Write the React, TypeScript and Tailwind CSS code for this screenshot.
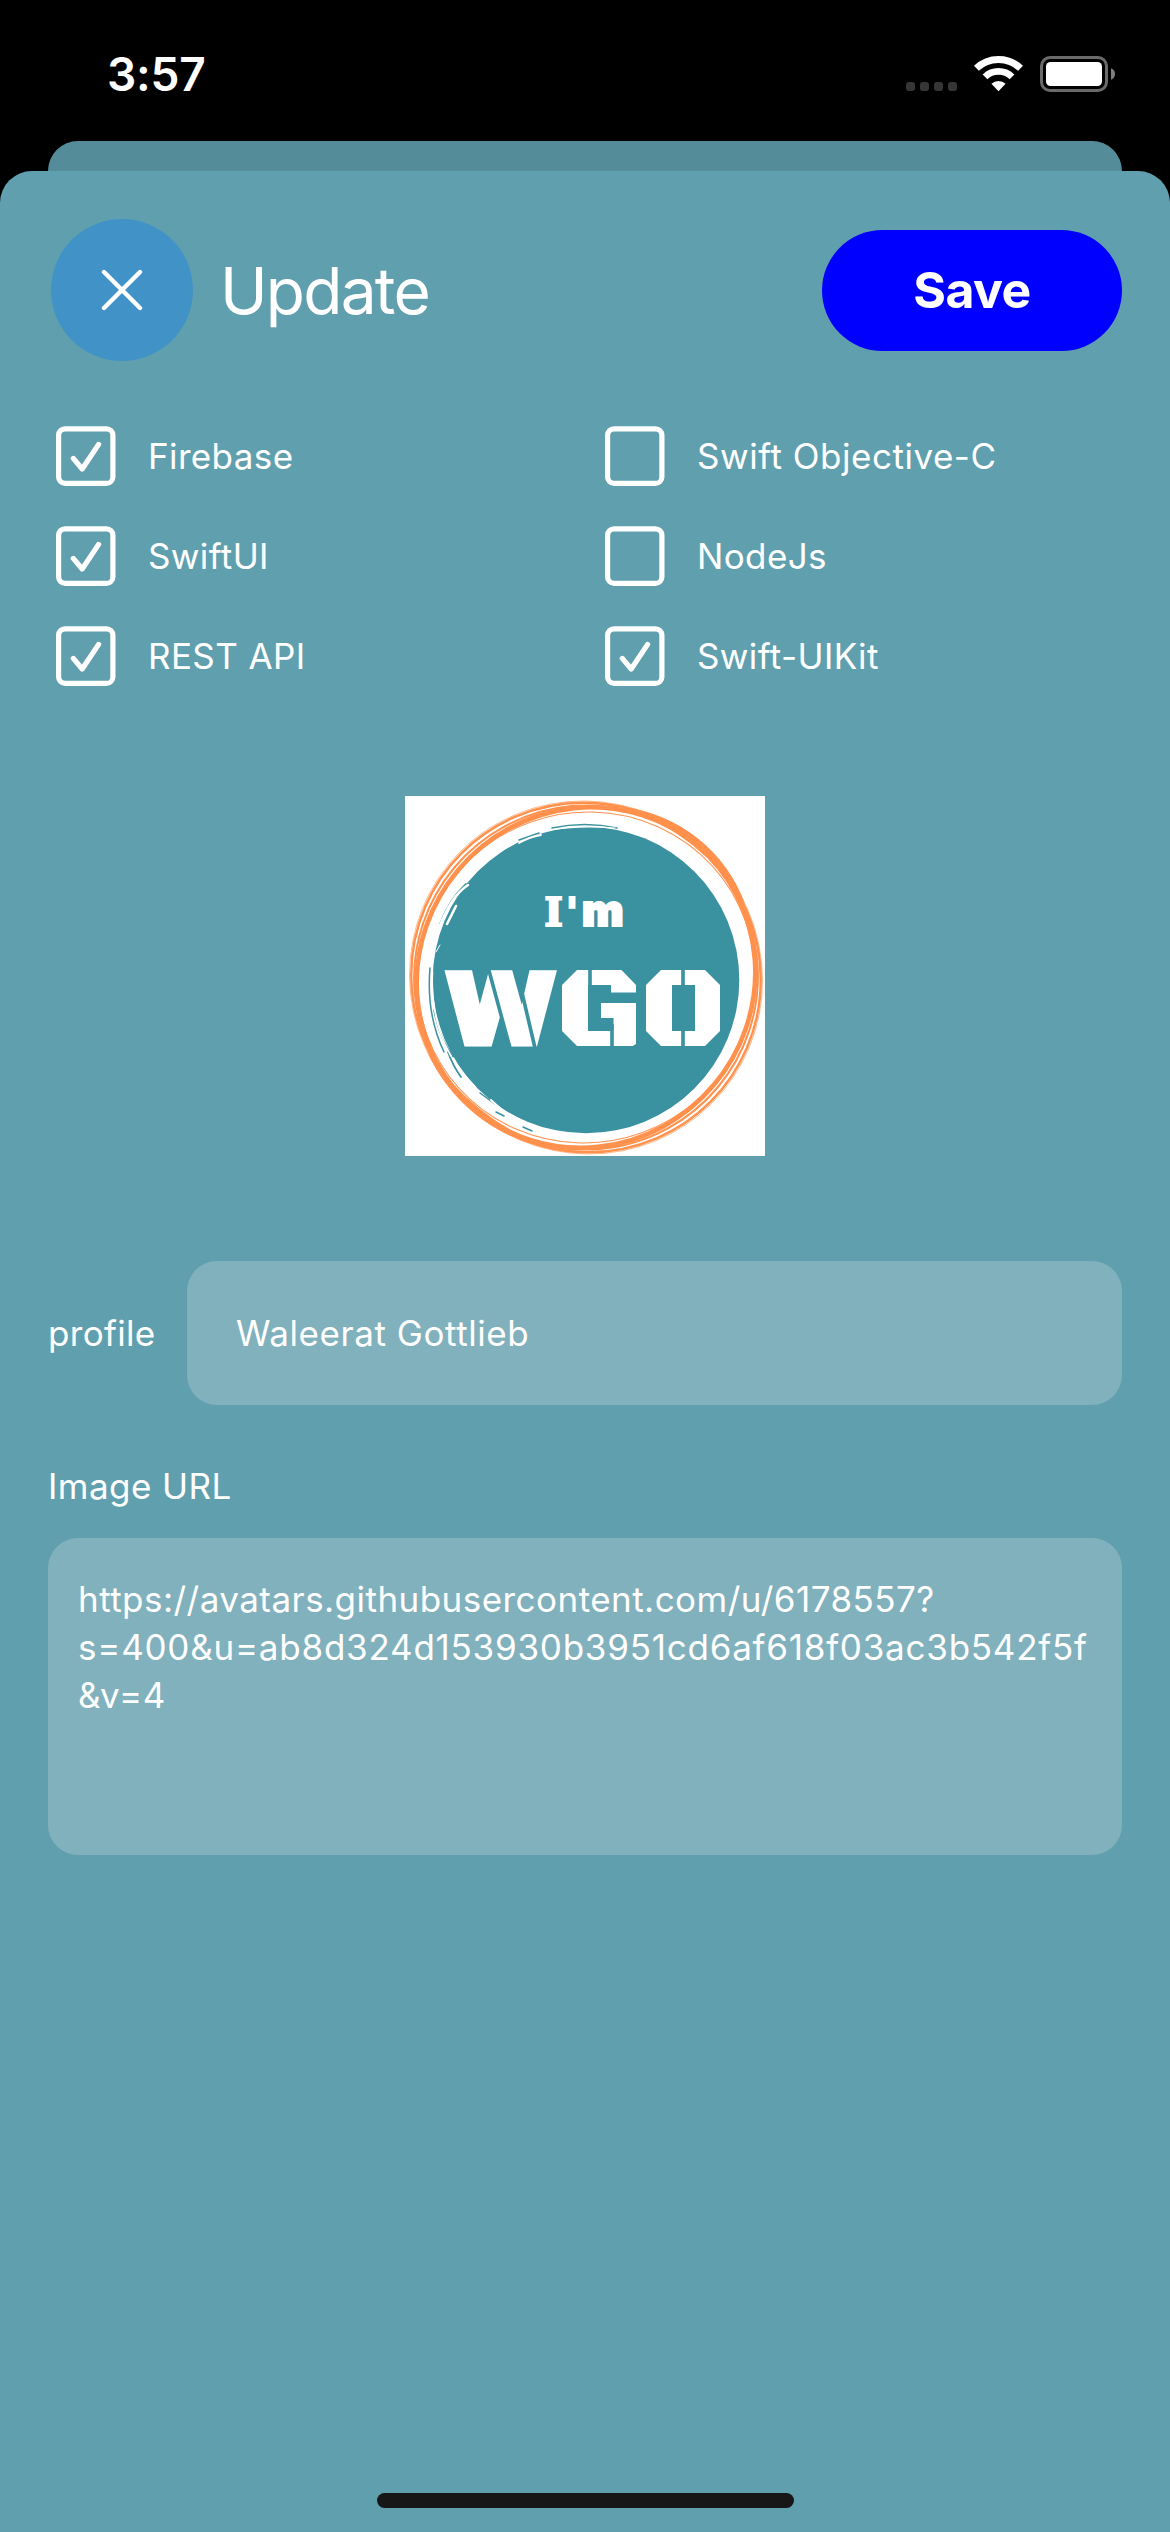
import React from "react";

type Skill = { label: string; on: boolean; tracking: string };

const SKILLS: Skill[] = [
  { label: "Firebase", on: true, tracking: "tracking-[0.37px]" },
  { label: "Swift Objective-C", on: false, tracking: "tracking-[0.52px]" },
  { label: "SwiftUI", on: true, tracking: "tracking-[0.38px]" },
  { label: "NodeJs", on: false, tracking: "tracking-[0.37px]" },
  { label: "REST API", on: true, tracking: "tracking-[0.4px]" },
  { label: "Swift-UIKit", on: true, tracking: "tracking-[0.38px]" },
];

function StatusBar() {
  return (
    <div className="flex h-[141px] items-start justify-between pl-[107px] pr-[55px] text-white">
      <span className="mt-[46px] text-[46px] leading-[56px] font-semibold tracking-[-0.2px]">3:57</span>
      <div className="mt-[55px] flex items-start">
        <div className="mt-[27px] flex gap-[5px]">
          <i className="size-[9px] rounded-[3px] bg-[#363636]" />
          <i className="size-[9px] rounded-[3px] bg-[#363636]" />
          <i className="size-[9px] rounded-[3px] bg-[#363636]" />
          <i className="size-[9px] rounded-[3px] bg-[#363636]" />
        </div>
        <svg className="ml-[17px]" width="49" height="37" viewBox="0 0 49 37" fill="none">
          <path d="M2.4 13.3A32 32 0 0 1 46.6 13.3" stroke="#fff" strokeWidth="7" />
          <path d="M11 21.9A19.5 19.5 0 0 1 38 21.9" stroke="#fff" strokeWidth="6.8" />
          <path d="M24.5 36.2L17.4 28.7A10.8 10.8 0 0 1 31.6 28.7Z" fill="#fff" />
        </svg>
        <svg className="ml-[17px]" width="75" height="37" viewBox="0 0 75 37" fill="none">
          <rect x="1.5" y="2.5" width="65" height="33" rx="8.5" stroke="#6a6a6a" strokeWidth="3" />
          <rect x="6" y="7" width="56" height="24" rx="4.5" fill="#fff" />
          <path d="M71 13.3Q75 15 75 19T71 24.7Z" fill="#7f7f7f" />
        </svg>
      </div>
    </div>
  );
}

function CheckItem({ label, on, tracking }: Skill) {
  return (
    <label className="flex h-[60px] items-center">
      <svg width="60" height="60" viewBox="0 0 60 60" fill="none" stroke="#fff" strokeWidth="5.2">
        <rect x="2.6" y="2.8" width="54.3" height="54.6" rx="6.5" />
        {on && <path d="M17.3 32.4L26.2 43L42.6 18.4" strokeLinecap="round" strokeLinejoin="round" />}
      </svg>
      <span className={`ml-[32px] text-[35px] whitespace-nowrap ${tracking}`}>{label}</span>
    </label>
  );
}

function Logo() {
  return (
    <svg width="360" height="360" viewBox="0 0 360 360" className="bg-white" fill="none">
      <defs>
        <clipPath id="octagon-g">
          <path d="M157 189L172 174H216.500L231 189V250H172L157 235Z" />
        </clipPath>
        <clipPath id="octagon-o">
          <path d="M241 189L256 174H300L315 189V235L300 250H256L241 235Z" />
        </clipPath>
      </defs>

      {/* hand-drawn orange rings */}
      <g stroke="#ff914d">
        <ellipse cx="181" cy="181.500" rx="172.500" ry="167" strokeWidth="4.600" transform="rotate(-50 181 181.5)" />
        <ellipse cx="181" cy="181.500" rx="173.500" ry="176" strokeWidth="2.400" transform="rotate(-45 181 181.5)" />
        <ellipse cx="181" cy="181.500" rx="172.500" ry="171.500" strokeWidth="2" transform="rotate(-50 181 181.5)" />
        <ellipse cx="181" cy="181.500" rx="169" ry="165" strokeWidth="1" transform="rotate(-20 181 181.5)" />
        <ellipse cx="181" cy="181.500" rx="175" ry="178" strokeWidth="0.600" transform="rotate(-45 181 181.5)" />
      </g>
      <path d="M218 11A149 149 0 0 1 340 108A232 232 0 0 0 218 11Z" fill="#ff914d" />
      <path d="M144 352A166 166 0 0 1 22 255A250 250 0 0 0 144 352Z" fill="#ff914d" />

      {/* brushed teal disc */}
      <circle cx="181" cy="184" r="153.300" fill="#3a919f" />
      <g stroke="#3a919f" strokeWidth="1.500" strokeLinecap="round">
        <path d="M147 32Q180 25 212 32" />
        <path d="M114 44L134 37" />
        <path d="M35 128Q44 104 61 88" strokeWidth="1.800" />
        <path d="M25 172Q21 218 39 256" />
        <path d="M29 214Q34 242 49 262" />
        <path d="M43 256Q48 270 56 281" strokeWidth="1.800" />
        <path d="M75 297L90 308M91 316L99 320M118 331L127 335" />
      </g>
      <g stroke="#fff" strokeLinecap="round">
        <path d="M148 33.500Q176 29 210 32" strokeWidth="1.200" />
        <path d="M114 47Q124 41 136 39" strokeWidth="1.800" />
        <path d="M34 132Q46 100 63 89" strokeWidth="2.600" />
        <path d="M42 128L51 110" strokeWidth="2.600" />
        <path d="M31 156L35 149" strokeWidth="1" />
        <path d="M27.500 176Q25 224 46 260" strokeWidth="1.600" />
        <path d="M48 262Q56 277 70 291" strokeWidth="2" />
        <path d="M86 304L98 315L120 329" strokeWidth="2" />
        <path d="M287 71L301 86" strokeWidth="1" />
      </g>

      <text y="129.500" fill="#fff" stroke="#fff" strokeWidth="2.200" className="font-['DejaVu_Serif'] text-[39px] font-bold">
        <tspan x="139.500">I</tspan>
        <tspan x="161">&apos;</tspan>
        <tspan x="177" className="font-['Inter'] text-[44px] font-black">
          m
        </tspan>
      </text>
      <g fill="#fff" stroke="#fff" className="font-['Roboto'] text-[100px] font-black">
        <text strokeWidth="5" transform="translate(42 247.5) scale(1.24 1)">
          W
        </text>
        <g clipPath="url(#octagon-g)">
          <text strokeWidth="18" transform="translate(155.5 247.5) scale(1.12 1)">
            G
          </text>
        </g>
        <g clipPath="url(#octagon-o)">
          <text strokeWidth="18" transform="translate(240 247.5) scale(1.08 1)">
            O
          </text>
        </g>
      </g>

      {/* counters and stencil bridges */}
      <path d="M183 189H206V196.500H232V207H196V222H208.500V235H183Z" fill="#3a919f" />
      <rect x="267" y="189" width="23" height="46" fill="#3a919f" />
      <g stroke="#3a919f" strokeWidth="3.600">
        <path d="M83 171L105 252M111 171L130 252" />
        <path d="M185 170V198M207 228V253M278 170V190M278 233V253" />
      </g>
    </svg>
  );
}

export default function App() {
  return (
    <div className="relative flex h-[2532px] w-[1170px] flex-col overflow-hidden bg-black font-['Inter',sans-serif]">
      <StatusBar />
      <div className="mx-[48px] h-[30px] shrink-0 rounded-t-[30px] bg-[#548c99]" />
      <main className="flex flex-1 flex-col rounded-t-[32px] bg-[#609fae] px-[48px] text-white">
        <header className="mt-[48px] flex h-[142px] items-center">
          <button className="ml-[3px] flex size-[142px] items-center justify-center rounded-full bg-[#4193c7]">
            <svg width="42" height="42" viewBox="0 0 42 42" stroke="#fff" strokeWidth="4.4" strokeLinecap="round">
              <path d="M3 3L39 39M39 3L3 39" />
            </svg>
          </button>
          <h1 className="ml-[27px] pt-[2px] text-[64px] leading-[78px] tracking-[-1.77px]">Update</h1>
          <button className="ml-auto h-[121px] w-[300px] rounded-full bg-[#0000ff] pt-[1px] text-[50px] font-bold tracking-[-0.6px]">
            Save
          </button>
        </header>

        <section className="mt-[65px] ml-[8px] grid grid-cols-[549px_1fr] gap-y-[40px]">
          {SKILLS.map((s) => (
            <CheckItem key={s.label} {...s} />
          ))}
        </section>

        <div className="mt-[110px] self-center">
          <Logo />
        </div>

        <div className="mt-[105px] flex h-[144px] items-center">
          <span className="w-[139px] text-[35px] tracking-[0.3px]">profile</span>
          <div className="flex h-full flex-1 items-center rounded-[30px] bg-[#80b1bd] pl-[49px] text-[35px] tracking-[0.56px]">
            Waleerat Gottlieb
          </div>
        </div>

        <div className="mt-[57px] text-[35px] leading-[48px] tracking-[0.44px]">Image URL</div>
        <div className="mt-[28px] h-[317px] rounded-[30px] bg-[#80b1bd] pt-[37px] pl-[30px] text-[35px] leading-[48px] whitespace-nowrap">
          <div className="tracking-[0.46px]">https://avatars.githubusercontent.com/u/6178557?</div>
          <div className="tracking-[0.76px]">s=400&amp;u=ab8d324d153930b3951cd6af618f03ac3b542f5f</div>
          <div className="tracking-[0.66px]">&amp;v=4</div>
        </div>

        <div className="mt-auto mb-[24px] h-[15px] w-[417px] self-center rounded-full bg-[#171717]" />
      </main>
    </div>
  );
}
